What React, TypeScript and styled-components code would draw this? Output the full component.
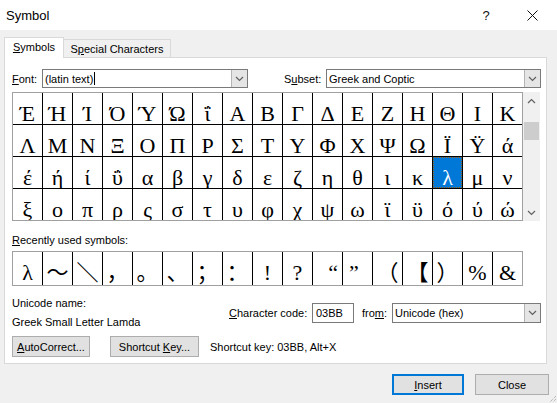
import React from "react";
import styled, { createGlobalStyle } from "styled-components";

const GlobalStyle = createGlobalStyle`
  html, body { margin: 0; padding: 0; }
  body {
    background: #f0f0f0;
    font-family: "Liberation Sans", Arial, sans-serif;
    font-size: 11px;
    color: #000;
  }
  * { box-sizing: border-box; }
`;

const Window = styled.div`
  position: relative;
  width: 557px;
  height: 403px;
  background: #f0f0f0;
  display: flex;
  flex-direction: column;
  overflow: hidden;
`;

const TitleBar = styled.div`
  flex: none;
  height: 30px;
  background: #fff;
  display: flex;
  align-items: center;
  padding-left: 6px;
  padding-right: 2px;
`;

const Title = styled.div`
  flex: 1;
  font-size: 13px;
`;

const CaptionButton = styled.div`
  width: 46px;
  height: 30px;
  display: flex;
  align-items: center;
  justify-content: center;
  font-size: 13px;
  color: #111;
`;

const Body = styled.div`
  flex: 1;
  display: flex;
  flex-direction: column;
  padding: 7px 0 0 4px;
`;

const TabStrip = styled.div`
  display: flex;
  align-items: flex-end;
  height: 20px;
`;

const Tab = styled.div<{ $active?: boolean; $w: number }>`
  position: relative;
  z-index: ${(p) => (p.$active ? 2 : 1)};
  width: ${(p) => p.$w}px;
  height: ${(p) => (p.$active ? 21 : 18)}px;
  margin-bottom: ${(p) => (p.$active ? -1 : 0)}px;
  margin-left: ${(p) => (p.$active ? 0 : -1)}px;
  border: 1px solid #d9d9d9;
  border-bottom: none;
  background: ${(p) => (p.$active ? "#fff" : "#f0f0f0")};
  display: flex;
  align-items: center;
  justify-content: center;
  padding-bottom: ${(p) => (p.$active ? 2 : 0)}px;
`;

const Key = styled.span`
  text-decoration: underline;
  text-underline-offset: 1px;
`;

const Panel = styled.div`
  width: 543px;
  height: 307px;
  background: #fff;
  border: 1px solid #d9d9d9;
  padding: 11px 0 0 7px;
  display: flex;
  flex-direction: column;
`;

const FieldRow = styled.div`
  display: flex;
  align-items: center;
  height: 19px;
`;

const Label = styled.div<{ $w: number; $ml?: number }>`
  flex: none;
  width: ${(p) => p.$w}px;
  margin-left: ${(p) => p.$ml ?? 0}px;
  white-space: nowrap;
`;

const Combo = styled.div<{ $w: number; $h: number }>`
  flex: none;
  width: ${(p) => p.$w}px;
  height: ${(p) => p.$h}px;
  border: 1px solid #7a7a7a;
  background: #fff;
  display: flex;
`;

const ComboText = styled.div`
  flex: 1;
  display: flex;
  align-items: center;
  padding-left: 2px;
  white-space: nowrap;
`;

const Caret = styled.span`
  display: inline-block;
  width: 1px;
  height: 13px;
  background: #000;
  margin-left: 1px;
`;

const ComboButton = styled.div`
  flex: none;
  width: 16px;
  background: #e5e5e5;
  border-left: 1px solid #b4b4b4;
  display: flex;
  align-items: center;
  justify-content: center;
`;

const GridWrap = styled.div`
  display: flex;
  margin-top: 4px;
`;

const CharGrid = styled.div<{ $rowH: number }>`
  display: grid;
  grid-template-columns: repeat(17, 29px);
  grid-auto-rows: ${(p) => p.$rowH}px;
  gap: 1px;
  background: #000;
  border: 1px solid #a0a0a0;
`;

const Cell = styled.div<{
  $sel?: boolean;
  $pt: number;
  $lh: number;
  $align?: string;
  $inset?: number;
}>`
  background: ${(p) => (p.$sel ? "#0078d7" : "#fff")};
  color: ${(p) => (p.$sel ? "#fff" : "#000")};
  outline: ${(p) => (p.$sel ? "1px dotted #a06010" : "none")};
  outline-offset: -1px;
  font-family: "Liberation Serif", "Times New Roman", "Noto Sans CJK SC", serif;
  font-size: 22px;
  line-height: ${(p) => p.$lh}px;
  padding-top: ${(p) => p.$pt}px;
  padding-left: ${(p) => (p.$align === "left" ? p.$inset ?? 0 : 0)}px;
  padding-right: ${(p) => (p.$align === "right" ? p.$inset ?? 0 : 0)}px;
  text-align: ${(p) => p.$align ?? "center"};
  overflow: hidden;
  white-space: nowrap;
`;

const ScrollBar = styled.div`
  width: 17px;
  background: #f0f0f0;
  display: flex;
  flex-direction: column;
`;

const ScrollArrow = styled.div`
  height: 17px;
  display: flex;
  align-items: center;
  justify-content: center;
`;

const ScrollTrack = styled.div`
  flex: 1;
  padding: 0 1px;
`;

const Thumb = styled.div`
  height: 18px;
  background: #cdcdcd;
`;

const SectionLabel = styled.div`
  margin-top: 13px;
  line-height: 13px;
`;

const RecentWrap = styled.div`
  margin-top: 4px;
  display: flex;
`;

const InfoRow = styled.div`
  margin-top: 11px;
  display: flex;
  align-items: center;
  height: 32px;
`;

const NameBlock = styled.div`
  width: 217px;
  align-self: flex-start;
  display: flex;
  flex-direction: column;
  gap: 6px;
  line-height: 13px;
`;

const CodeInput = styled.div`
  width: 42px;
  height: 20px;
  border: 1px solid #7a7a7a;
  background: #fff;
  display: flex;
  align-items: center;
  padding-left: 3px;
`;

const ButtonRow = styled.div`
  margin-top: 7px;
  display: flex;
  align-items: center;
`;

const Button = styled.div<{ $w: number; $default?: boolean; $mr?: number }>`
  flex: none;
  width: ${(p) => p.$w}px;
  height: 21px;
  margin-right: ${(p) => p.$mr ?? 0}px;
  background: #e1e1e1;
  border: ${(p) => (p.$default ? "2px solid #0078d7" : "1px solid #adadad")};
  display: flex;
  align-items: center;
  justify-content: center;
  white-space: nowrap;
`;

const Footer = styled.div`
  margin-top: 10px;
  padding-right: 8px;
  display: flex;
  justify-content: flex-end;
  gap: 11px;
`;

const Grip = styled.svg`
  position: absolute;
  right: 0;
  bottom: 0;
`;

const Chevron = ({ up }: { up?: boolean }) => (
  <svg width="9" height="6" viewBox="0 0 9 6">
    <polyline
      points={up ? "1,5 4.5,1.5 8,5" : "1,1 4.5,4.5 8,1"}
      fill="none"
      stroke="#606060"
      strokeWidth="1.2"
    />
  </svg>
);

const rows = [
  "ΈΉΊΌΎΏΐΑΒΓΔΕΖΗΘΙΚ",
  "ΛΜΝΞΟΠΡΣΤΥΦΧΨΩΪΫά",
  "έήίΰαβγδεζηθικλμν",
  "ξοπρςστυφχψωϊϋόύώ",
];

const recent: { ch: string; align?: string; inset?: number }[] = [
  { ch: "λ" },
  { ch: "～" },
  { ch: "＼" },
  { ch: "，" },
  { ch: "。" },
  { ch: "、" },
  { ch: "；" },
  { ch: "：" },
  { ch: "!" },
  { ch: "?" },
  { ch: "“", align: "right", inset: 4 },
  { ch: "”", align: "left", inset: 6 },
  { ch: "（" },
  { ch: "【" },
  { ch: "）" },
  { ch: "%" },
  { ch: "&" },
];

export default function App() {
  return (
    <>
      <GlobalStyle />
      <Window>
        <TitleBar>
          <Title>Symbol</Title>
          <CaptionButton>?</CaptionButton>
          <CaptionButton>
            <svg width="11" height="11" viewBox="0 0 11 11">
              <path d="M0.5 0.5 L10.5 10.5 M10.5 0.5 L0.5 10.5" stroke="#111" strokeWidth="1" />
            </svg>
          </CaptionButton>
        </TitleBar>
        <Body>
          <TabStrip>
            <Tab $active $w={60}>
              <span>
                <Key>S</Key>ymbols
              </span>
            </Tab>
            <Tab $w={108}>
              <span>
                S<Key>p</Key>ecial Characters
              </span>
            </Tab>
          </TabStrip>
          <Panel>
            <FieldRow>
              <Label $w={30}>
                <Key>F</Key>ont:
              </Label>
              <Combo $w={206} $h={19}>
                <ComboText>
                  (latin text)
                  <Caret />
                </ComboText>
                <ComboButton>
                  <Chevron />
                </ComboButton>
              </Combo>
              <Label $w={42} $ml={36}>
                S<Key>u</Key>bset:
              </Label>
              <Combo $w={215} $h={19}>
                <ComboText>Greek and Coptic</ComboText>
                <ComboButton>
                  <Chevron />
                </ComboButton>
              </Combo>
            </FieldRow>

            <GridWrap>
              <CharGrid $rowH={31}>
                {rows.map((r, ri) =>
                  Array.from(r).map((ch, ci) => (
                    <Cell
                      key={`${ri}-${ci}`}
                      $pt={10}
                      $lh={21}
                      $sel={ri === 2 && ci === 14}
                    >
                      {ch}
                    </Cell>
                  ))
                )}
              </CharGrid>
              <ScrollBar>
                <ScrollArrow>
                  <Chevron up />
                </ScrollArrow>
                <ScrollTrack>
                  <Thumb style={{ marginTop: 13 }} />
                </ScrollTrack>
                <ScrollArrow>
                  <Chevron />
                </ScrollArrow>
              </ScrollBar>
            </GridWrap>

            <SectionLabel>
              <Key>R</Key>ecently used symbols:
            </SectionLabel>
            <RecentWrap>
              <CharGrid $rowH={33}>
                {recent.map((r, i) => (
                  <Cell key={i} $pt={9} $lh={24} $align={r.align} $inset={r.inset}>
                    {r.ch}
                  </Cell>
                ))}
              </CharGrid>
            </RecentWrap>

            <InfoRow>
              <NameBlock>
                <div>Unicode name:</div>
                <div>Greek Small Letter Lamda</div>
              </NameBlock>
              <Label $w={83}>
                <Key>C</Key>haracter code:
              </Label>
              <CodeInput>03BB</CodeInput>
              <Label $w={30} $ml={8}>
                fro<Key>m</Key>:
              </Label>
              <Combo $w={149} $h={20}>
                <ComboText>Unicode (hex)</ComboText>
                <ComboButton>
                  <Chevron />
                </ComboButton>
              </Combo>
            </InfoRow>

            <ButtonRow>
              <Button $w={78} $mr={20}>
                <span>
                  <Key>A</Key>utoCorrect...
                </span>
              </Button>
              <Button $w={89} $mr={11}>
                <span>
                  Shortcut <Key>K</Key>ey...
                </span>
              </Button>
              <span>Shortcut key: 03BB, Alt+X</span>
            </ButtonRow>
          </Panel>

          <Footer>
            <Button $w={72} $default>
              <span>
                <Key>I</Key>nsert
              </span>
            </Button>
            <Button $w={74}>Close</Button>
          </Footer>
        </Body>
        <Grip width="10" height="10" viewBox="0 0 10 10">
          <path d="M9 3 L3 9 M9 6 L6 9" stroke="#a0a0a0" strokeWidth="1" strokeDasharray="1 1" />
        </Grip>
      </Window>
    </>
  );
}
